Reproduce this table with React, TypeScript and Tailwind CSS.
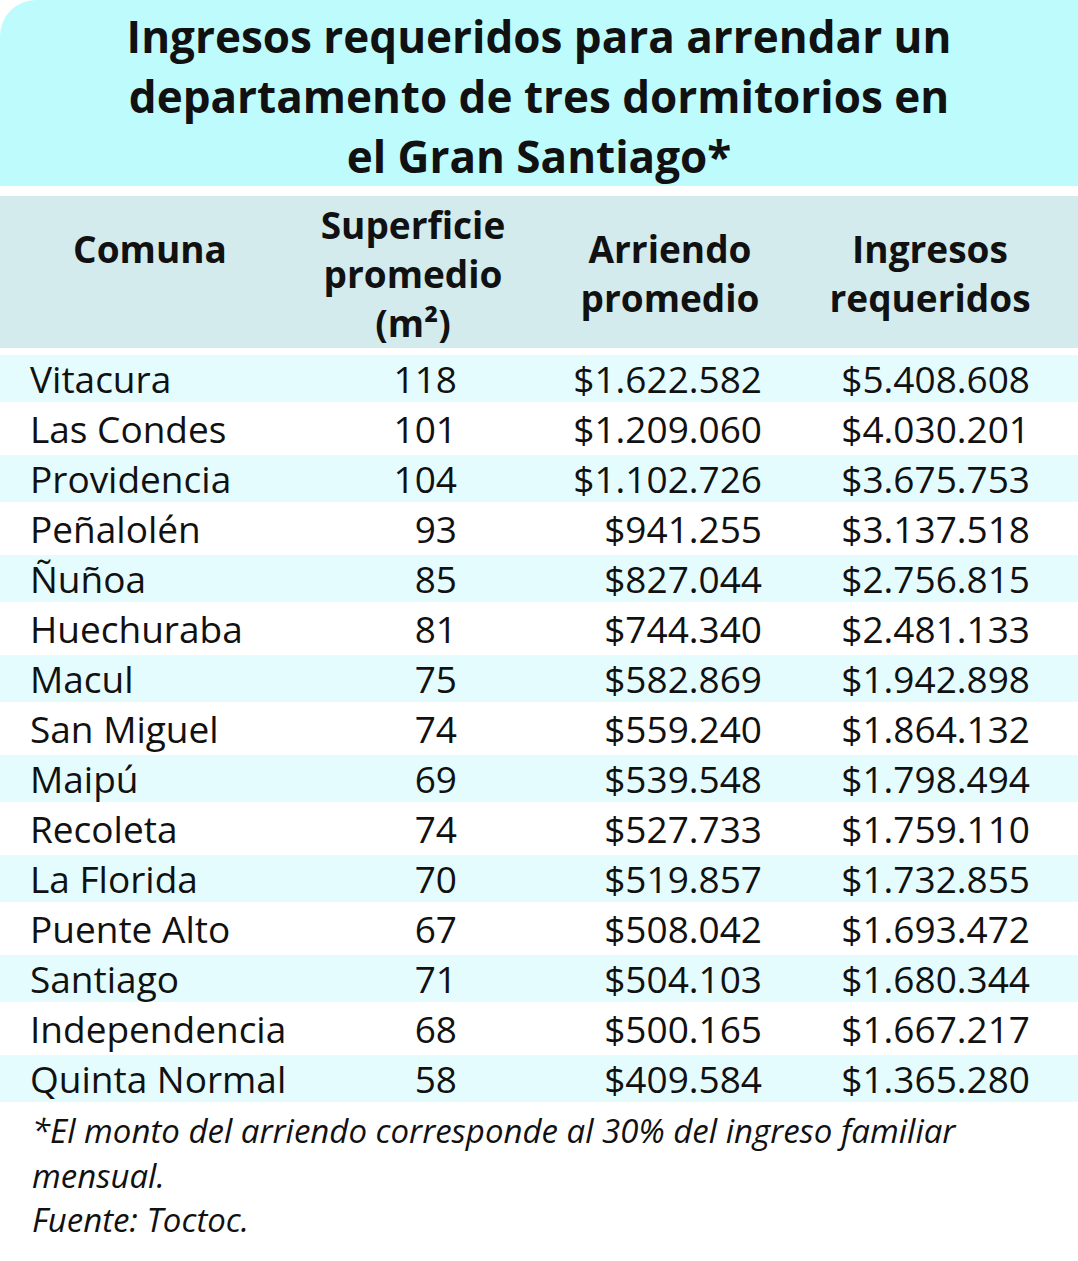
const rows: [string, string, string, string][] = [
  ['Vitacura', '118', '$1.622.582', '$5.408.608'],
  ['Las Condes', '101', '$1.209.060', '$4.030.201'],
  ['Providencia', '104', '$1.102.726', '$3.675.753'],
  ['Peñalolén', '93', '$941.255', '$3.137.518'],
  ['Ñuñoa', '85', '$827.044', '$2.756.815'],
  ['Huechuraba', '81', '$744.340', '$2.481.133'],
  ['Macul', '75', '$582.869', '$1.942.898'],
  ['San Miguel', '74', '$559.240', '$1.864.132'],
  ['Maipú', '69', '$539.548', '$1.798.494'],
  ['Recoleta', '74', '$527.733', '$1.759.110'],
  ['La Florida', '70', '$519.857', '$1.732.855'],
  ['Puente Alto', '67', '$508.042', '$1.693.472'],
  ['Santiago', '71', '$504.103', '$1.680.344'],
  ['Independencia', '68', '$500.165', '$1.667.217'],
  ['Quinta Normal', '58', '$409.584', '$1.365.280'],
]

export default function App() {
  return (
    <div className="w-[1078px] h-[1261px] bg-white text-[#111] font-['Open_Sans','Noto_Sans',sans-serif]">
      <div className="h-[186px] rounded-tl-[36px] bg-[#bdfbfc] pt-[6px] text-center text-[44px] font-bold leading-[60px]">
        <div>Ingresos requeridos para arrendar un</div>
        <div>departamento de tres dormitorios en</div>
        <div>el Gran Santiago*</div>
      </div>

      <div className="mt-[10px] h-[152px] bg-[#d3ebec] grid grid-cols-[300px_226px_288px_232px_32px] text-center text-[37px] font-bold leading-[49px]">
        <div className="pt-[28px]">Comuna</div>
        <div className="pt-[4px]">
          <div>Superficie</div>
          <div>promedio</div>
          <div>(m²)</div>
        </div>
        <div className="pt-[28px]">
          <div>Arriendo</div>
          <div>promedio</div>
        </div>
        <div className="pt-[28px]">
          <div>Ingresos</div>
          <div>requeridos</div>
        </div>
        <div />
      </div>

      <div className="mt-[7px]">
        {rows.map((r, i) => (
          <div
            key={r[0]}
            className={
              i % 2 === 0
                ? 'h-[47px] bg-[#e4fcfd] grid grid-cols-[290px_167px_305px_268px_48px] items-center text-[37px] leading-none'
                : 'h-[53px] bg-white grid grid-cols-[290px_167px_305px_268px_48px] items-center text-[37px] leading-none'
            }
          >
            <div className="pl-[30px] whitespace-nowrap">{r[0]}</div>
            <div className="text-right">{r[1]}</div>
            <div className="text-right">{r[2]}</div>
            <div className="text-right">{r[3]}</div>
            <div />
          </div>
        ))}
      </div>

      <div className="pt-[7px] pl-[32px] text-[33px] italic leading-[44.5px]">
        <div>*El monto del arriendo corresponde al 30% del ingreso familiar</div>
        <div>mensual.</div>
        <div>Fuente: Toctoc.</div>
      </div>
    </div>
  )
}
